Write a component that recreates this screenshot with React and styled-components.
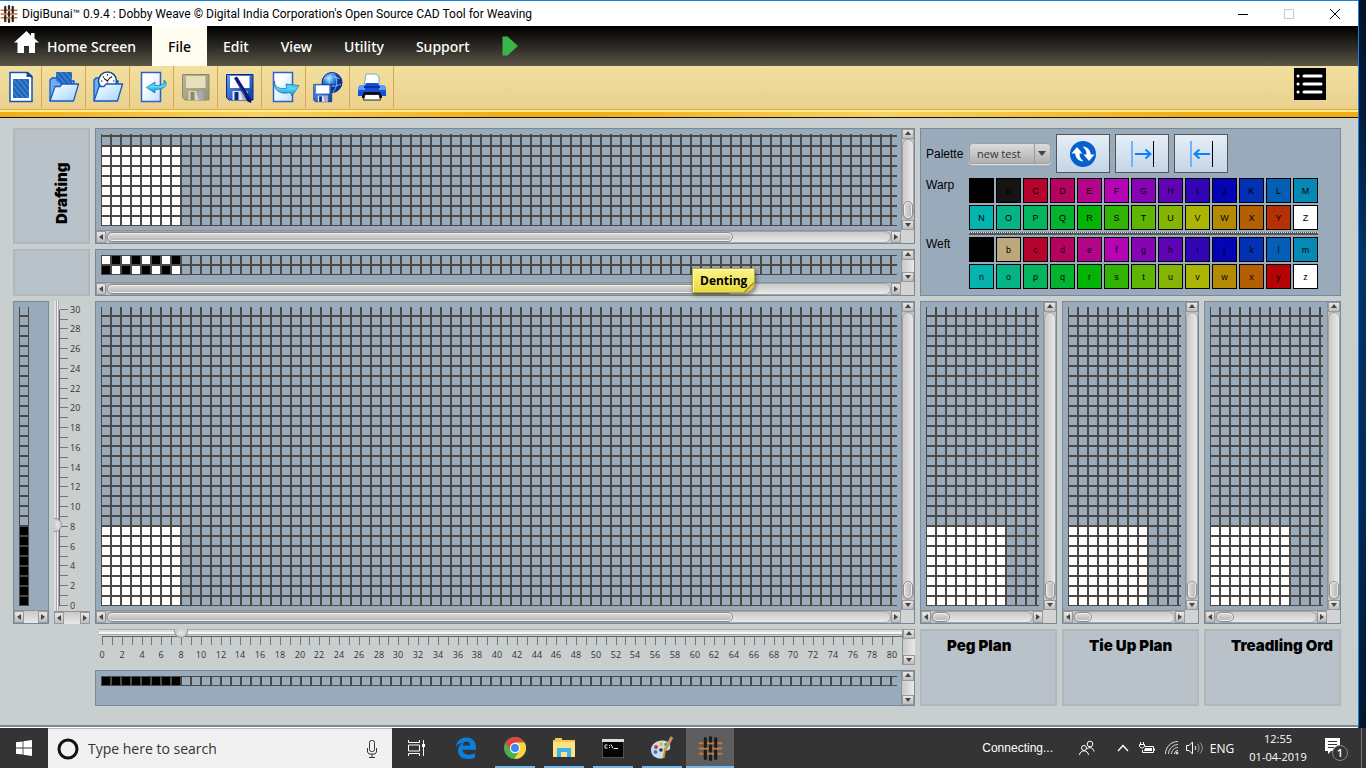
import React, { useId, useState } from 'react'
import styled, { createGlobalStyle, css } from 'styled-components'

const GlobalStyle = createGlobalStyle`
  * {
    box-sizing: border-box;
  }

  body {
    margin: 0;
    background: #001a38;
    font-family: 'Open Sans', 'Noto Sans', sans-serif;
    font-size: 12px;
    color: #000;
  }

  button, input, select {
    font: inherit;
    color: inherit;
    margin: 0;
    padding: 0;
    border: 0;
    background: none;
  }

  svg {
    display: block;
    flex: none;
  }
`

const LINE = '#4c4846'
const CELL = 10

/* ---------- window frame ---------- */

const Desktop = styled.div`
  padding-right: 7px;
  background: linear-gradient(#00122a, #002046 20%, #003468 35%, #002a58 70%, #001630);
`

const Window = styled.div`
  border-top: 1px solid #1b7fd4;
  border-right: 1px solid #1b7fd4;
  background: #c9cfce;
`

const TitleBar = styled.header`
  display: flex;
  align-items: center;
  height: 25px;
  background: #fff;

  h1 {
    flex: 1;
    margin: 0 0 0 4px;
    font-family: Roboto, sans-serif;
    font-size: 12px;
    font-weight: 400;
    line-height: 24px;
    white-space: nowrap;
  }
`

const CaptionButton = styled.button`
  display: flex;
  align-items: center;
  justify-content: center;
  width: 46px;
  height: 24px;
`

const MenuBar = styled.nav`
  display: flex;
  height: 40px;
  background: linear-gradient(#000, #2a2823 50%, #5b5647);
`

const MenuItem = styled.button`
  display: flex;
  align-items: center;
  gap: 8px;
  padding: 0 16px;
  font-family: 'Noto Sans', sans-serif;
  font-size: 14px;
  font-weight: 500;
  color: #fff;

  &:first-child {
    padding-left: 14px;
  }

  ${p => p.$active && css`
    background: #fffdf0;
    color: #000;
  `}
`

const Toolbar = styled.div`
  display: flex;
  height: 43px;
  background: linear-gradient(#f3e09e, #e9d08f);
`

const ToolButton = styled.button`
  display: flex;
  align-items: center;
  justify-content: center;
  width: 44px;
  height: 42px;
  border-right: 1px solid #dda550;

  &:first-child {
    width: 42px;
  }
`

const ListButton = styled.button`
  width: 32px;
  height: 32px;
  margin: 2px 32px 0 auto;
  background: #000;
`

const GoldStrip = styled.div`
  height: 9px;
  border-top: 1px solid #f0a040;
  border-bottom: 1px solid #111;
  background:
    linear-gradient(#fbf08a, #fbf08a) 0 0 / 100% 2px no-repeat,
    linear-gradient(90deg, #f0ad12, #f8d360 19%, #f0ad12 37%, #f0ad12 43%, #f8d360 65%, #f0ad12 88%);
`

/* ---------- workspace ---------- */

const Workspace = styled.main`
  display: grid;
  grid-template-columns: 77px minmax(0, 1fr) repeat(3, 137px);
  gap: 5px;
  padding: 10px 17px 19px 13px;
  border-bottom: 2px solid #788896;
  box-shadow: 0 1px 0 #fff;
  margin-bottom: 1px;
`

const Panel = styled.section`
  position: relative;
  display: grid;
  grid-template-columns: minmax(0, 1fr) auto;
  grid-template-rows: 1fr auto;
  border: 1px solid #778899;
  background: #99aaba;
`

const Viewport = styled.div`
  padding: 5px 4px ${p => p.$bottom || 4}px 5px;
`

const Corner = styled.div`
  background: #d3d3d3;
`

const PlanLabel = styled.h2`
  grid-row: span 2;
  margin: 0;
  padding: 5px 4px 5px 25px;
  border: 2px solid #b0b8be;
  background: #bac2c9;
  font-family: Inter, 'Liberation Sans', sans-serif;
  font-size: 15px;
  font-weight: 900;
  line-height: 20px;
  white-space: nowrap;
  overflow: hidden;
`

const SideLabel = styled.h2`
  display: flex;
  justify-content: flex-end;
  margin: 0;
  padding: 18px;
  border: 2px solid #b0b8be;
  background: #bac2c9;
  font-family: Inter, 'Liberation Sans', sans-serif;
  font-size: 15px;
  font-weight: 900;
  line-height: 16px;

  span {
    writing-mode: vertical-rl;
    transform: rotate(180deg);
  }
`

const SideColumns = styled.div`
  display: grid;
  grid-template-columns: 1fr 1fr;
  gap: 5px;
`

/* ---------- scroll bars ---------- */

const BarBox = styled.div`
  display: flex;
  flex-direction: ${p => (p.$vertical ? 'column' : 'row')};
  ${p => (p.$vertical ? 'width: 13px;' : 'height: 13px;')}
  background: #c4c4c4;
  border: 0 solid #909090;
  border-width: ${p => (p.$vertical ? '0 0 0 1px' : '1px 0 0 0')};
`

const BarButton = styled.button`
  display: flex;
  align-items: center;
  justify-content: center;
  flex: none;
  ${p => (p.$vertical ? 'height: 10px;' : 'width: 10px;')}
  border: 1px solid #999;
  background: linear-gradient(#e8e8e8, #bdbdbd);
`

const BarTrack = styled.div`
  flex: 1;
  display: flex;
  flex-direction: ${p => (p.$vertical ? 'column' : 'row')};
  justify-content: ${p => (p.$atEnd ? 'flex-end' : 'flex-start')};
  background: linear-gradient(${p => (p.$vertical ? '90deg' : '180deg')}, #c9c9c9, #e9e9e9);
  ${p => !p.$empty && css`
    border: 1px solid #a4a4a4;
    border-radius: 6px;
  `}
`

const BarThumb = styled.div`
  flex: 0 0 ${p => p.$size};
  border: 1px solid #8e8e8e;
  border-radius: 6px;
  box-shadow: inset 0 0 0 1px #eee;
  background: linear-gradient(${p => (p.$vertical ? '90deg' : '180deg')}, #dedede, #b4b4b4);
`

const ARROWS = {
  up: 'M0 4h6L3 0z',
  down: 'M0 1h6L3 5z',
  left: 'M5 0v6L1 3z',
  right: 'M1 0v6l4-3z',
}

const Arrow = ({ to }) => (
  <svg width="6" height="6" viewBox="0 0 6 6"><path d={ARROWS[to]} fill="#444" /></svg>
)

const ScrollBar = ({ vertical, size, atEnd }) => (
  <BarBox $vertical={vertical}>
    <BarButton $vertical={vertical} aria-label={vertical ? 'Scroll up' : 'Scroll left'}>
      <Arrow to={vertical ? 'up' : 'left'} />
    </BarButton>
    <BarTrack $vertical={vertical} $atEnd={atEnd} $empty={!size}>
      {size && <BarThumb $vertical={vertical} $size={size} />}
    </BarTrack>
    <BarButton $vertical={vertical} aria-label={vertical ? 'Scroll down' : 'Scroll right'}>
      <Arrow to={vertical ? 'down' : 'right'} />
    </BarButton>
  </BarBox>
)

/* ---------- weave grids ---------- */

// cells are counted from the bottom left, like on point paper
const Weave = ({ height, width = '100%', cells }) => {
  const id = useId()
  return (
    <svg width={width} height={height} shapeRendering="crispEdges">
      <defs>
        <pattern id={id} width={CELL} height={CELL} y={height % CELL} patternUnits="userSpaceOnUse">
          <rect x="0.5" y="0.5" width="9" height="9" fill="none" stroke={LINE} />
        </pattern>
      </defs>
      {cells.map(([col, row, fill]) => (
        <rect
          key={`${col}-${row}`}
          x={col * CELL}
          y={height - (row + 1) * CELL}
          width={CELL}
          height={CELL}
          fill={fill}
        />
      ))}
      <rect width="100%" height="100%" fill={`url(#${id})`} />
    </svg>
  )
}

const block = (cols, rows, paint) => {
  const list = []
  for (let r = 0; r < rows; r++) {
    for (let c = 0; c < cols; c++) list.push([c, r, paint(c, r)])
  }
  return list
}

const white = () => '#fff'
const black = () => '#000'
const WHITE_BLOCK = block(8, 8, white)
const DENTING = block(8, 2, (c, r) => ((c + r) % 2 ? '#fff' : '#000'))
const WARP_COLORS = block(1, 8, black)
const WEFT_COLORS = block(8, 1, black)

const WeavePanel = ({ height, bottom, cells, vSize, hSize, children }) => (
  <Panel>
    <Viewport $bottom={bottom}><Weave height={height} cells={cells} /></Viewport>
    <ScrollBar vertical size={vSize} atEnd />
    <ScrollBar size={hSize} />
    <Corner />
    {children}
  </Panel>
)

/* ---------- rulers ---------- */

const RulerArea = styled.div`
  display: grid;
  grid-template-columns: minmax(0, 1fr);
  overflow: hidden;

  > * {
    grid-area: 1 / 1;
  }
`

const thumbLook = css`
  appearance: none;
  border: 1px solid #999;
  background: radial-gradient(#e6e6e6, #c2c2c2);
`

const HRange = styled.input`
  appearance: none;
  align-self: start;
  width: 100%;
  height: 9px;

  &::-webkit-slider-runnable-track {
    height: 9px;
    background: linear-gradient(#a8a8a8 1px, #dedede 1px 3px, #f6f6f6 3px 5px, #aaa 5px 6px, transparent 6px) 4px 0 no-repeat;
  }

  &::-webkit-slider-thumb {
    ${thumbLook}
    width: 14px;
    height: 9px;
    border-top: 0;
    border-radius: 0 0 7px 7px;
  }
`

const VRange = styled.input`
  appearance: none;
  writing-mode: vertical-lr;
  direction: rtl;
  justify-self: start;
  width: 8px;
  height: 310px;

  &::-webkit-slider-runnable-track {
    width: 8px;
    background: linear-gradient(90deg, #dedede 2px, #aaa 2px 3px, #f6f6f6 3px 4px, #aaa 4px 5px, transparent 5px);
  }

  &::-webkit-slider-thumb {
    ${thumbLook}
    width: 8px;
    height: 14px;
    border-left: 0;
    border-radius: 0 7px 7px 0;
  }
`

const RulerText = styled.text`
  font-size: 9px;
  fill: #333;
`

const step = i => Math.round((i * 79) / 8)

const HRuler = () => (
  <svg width="100%" height="36" shapeRendering="crispEdges">
    <line x1="7" x2="100%" y1="7.5" y2="7.5" stroke="#666" />
    {Array.from({ length: 101 }, (_, i) => (
      <line key={i} x1={step(i) + 7.5} x2={step(i) + 7.5} y1="8" y2="16" stroke="#777" />
    ))}
    {Array.from({ length: 41 }, (_, i) => (
      <RulerText key={i} x={step(i * 2) + 7} y="29" textAnchor="middle">{i * 2}</RulerText>
    ))}
  </svg>
)

const VRuler = () => (
  <svg width="100%" height="310" shapeRendering="crispEdges">
    <line x1="5.5" x2="5.5" y1="9" y2="305" stroke="#666" />
    {Array.from({ length: 31 }, (_, i) => (
      <line key={i} x1="6" x2="14" y1={304.5 - step(i)} y2={304.5 - step(i)} stroke="#777" />
    ))}
    {Array.from({ length: 16 }, (_, i) => (
      <RulerText key={i} x="16" y={308 - step(i * 2)}>{i * 2}</RulerText>
    ))}
  </svg>
)

const HRulerRow = styled.div`
  display: grid;
  grid-column: 2;
  grid-template-columns: minmax(0, 1fr) auto;
`

const WeftPanel = styled(Panel)`
  grid-column: 2;
`

const VRulerColumn = styled.div`
  display: grid;
  grid-template-rows: 1fr auto;
`

/* ---------- note ---------- */

const Note = styled.div`
  position: absolute;
  left: 596px;
  top: 18px;
  padding: 0 7px;
  border: 1px solid #b8a92c;
  border-radius: 0 0 10px 0;
  background: linear-gradient(135deg, transparent 88%, #a89a20 88% 90%, #d8ca50 90%), linear-gradient(#fbf48c, #e8d93e);
  box-shadow: 1px 2px 4px rgba(0, 0, 0, 0.5), inset 1px 1px 0 #fffbc4;
  font-size: 12px;
  font-weight: 700;
  line-height: 23px;
`

/* ---------- palette ---------- */

const PalettePanel = styled.section`
  grid-column: span 3;
  grid-row: span 2;
  display: grid;
  grid-template-columns: 43px auto;
  justify-content: start;
  align-content: start;
  padding: 5px 5px 6px;
  border: 1px solid #778899;
  background: #99aaba;
  font-family: 'Liberation Sans', Arial, sans-serif;
  font-size: 12px;
  line-height: 14px;
`

const PaletteTop = styled.div`
  display: flex;
  align-items: center;
  gap: 5px;
  margin-bottom: 5px;
`

const PaletteLabel = styled.label`
  align-self: center;
  margin-bottom: 5px;
`

const SelectBox = styled.div`
  position: relative;
  width: 82px;

  select {
    appearance: none;
    width: 100%;
    height: 21px;
    padding-left: 7px;
    border: 1px solid #a0a0a0;
    border-radius: 4px;
    background: linear-gradient(90deg, transparent 64px, #999 64px 65px, transparent 65px), linear-gradient(#dcdcdc, #b0b0b0);
    box-shadow: 0 1px 1px #e4e8ec;
    font-family: 'Open Sans', sans-serif;
    font-size: 11px;
    color: #333;
  }

  svg {
    position: absolute;
    right: 5px;
    top: 8px;
    pointer-events: none;
  }
`

const PaletteButton = styled.button`
  display: flex;
  align-items: center;
  justify-content: center;
  width: 54px;
  height: 39px;
  border: 1px solid #555;
  background: linear-gradient(#e6eef7, #c3d5e8);
`

const Swatches = styled.div`
  display: grid;
  grid-template-columns: repeat(13, 25px);
  gap: 2px;
`

const Swatch = styled.button`
  height: 25px;
  border: 1px solid #000;
  background: ${p => p.$color};
  font-size: 9px;
`

const Divider = styled.div`
  grid-column: 2;
  height: 3px;
  margin: 2px 0;
  border-top: 1px dotted #ddd;
  background: #555;
`

const HUES = [
  '#000000', '#151515', '#b4042e', '#b4045f', '#b4048a', '#b404b4', '#8604b4', '#5f04b4', '#3104b4', '#0404b4', '#0431b4', '#045fb4', '#048ab4',
  '#04b4ae', '#04b486', '#04b45f', '#04b431', '#04b404', '#31b404', '#5fb404', '#86b404', '#aeb404', '#b48a04', '#b45f04', '#b43104', '#ffffff',
]

const warp = HUES.map((color, i) => ({ name: String.fromCharCode(65 + i), color }))
const weft = HUES.map((color, i) => ({ name: String.fromCharCode(97 + i), color }))
weft[1].color = '#bda87c'
weft[24].color = '#b40404'

const SwatchGrid = ({ items }) => (
  <Swatches>
    {items.map(s => <Swatch key={s.name} $color={s.color}>{s.name}</Swatch>)}
  </Swatches>
)

const Palette = () => (
  <PalettePanel>
    <PaletteLabel htmlFor="palette">Palette</PaletteLabel>
    <PaletteTop>
      <SelectBox>
        <select id="palette"><option>new test</option></select>
        <svg width="8" height="5"><path d="M0 0h8L4 5z" fill="#444" /></svg>
      </SelectBox>
      <PaletteButton aria-label="Swap colors">
        <svg width="28" height="28" viewBox="0 0 28 28">
          <circle cx="14" cy="14" r="13" fill="#0560cc" />
          <path d="M8 7L13.500 13.500h-3c0 3 1 5.500 4 8-5-.5-8-3.500-8.300-8H2.500z" fill="#fff" />
          <path d="M20 21L14.500 14.500h3c0-3-1-5.500-4-8 5 .5 8 3.500 8.300 8h3.700z" fill="#fff" />
        </svg>
      </PaletteButton>
      <PaletteButton aria-label="Warp to weft">
        <svg width="24" height="28" fill="none">
          <path d="M2 1v26" stroke="#71b1f7" strokeWidth="2" />
          <path d="M23.500 1v26" stroke="#000" />
          <path d="M5 14h14M15.500 9.500l5 4.500-5 4.500" stroke="#1080f8" strokeWidth="2" />
        </svg>
      </PaletteButton>
      <PaletteButton aria-label="Weft to warp">
        <svg width="24" height="28" fill="none">
          <path d="M2 1v26" stroke="#71b1f7" strokeWidth="2" />
          <path d="M23.500 1v26" stroke="#000" />
          <path d="M21 14H7M10.500 9.500L5.500 14l5 4.500" stroke="#1080f8" strokeWidth="2" />
        </svg>
      </PaletteButton>
    </PaletteTop>
    <span>Warp</span>
    <SwatchGrid items={warp} />
    <Divider />
    <span>Weft</span>
    <SwatchGrid items={weft} />
  </PalettePanel>
)

/* ---------- icons ---------- */

const Logo = ({ size, ink = '#2c2a28' }) => (
  <svg width={size} height={size} viewBox="0 0 24 24" fill="none" strokeLinecap="round">
    <path d="M1.500 7h21M1.500 12h21M1.500 17h21" stroke="#cf7434" strokeWidth="2" />
    <path d="M7 2.500v7.500M7 14.500v7M12 1.500v3.500M12 9.500v5M12 19v3.500M17 2.500v7.500M17 14.500v7" stroke={ink} strokeWidth="3" />
  </svg>
)

const Gradients = () => (
  <svg width="0" height="0" style={{ position: 'absolute' }} aria-hidden="true">
    <defs>
      <linearGradient id="folder" x2="1" y2="1">
        <stop stopColor="#fff" />
        <stop offset="1" stopColor="#9fd4fb" />
      </linearGradient>
      <linearGradient id="disk" x2="1" y2="1">
        <stop stopColor="#5f9bea" />
        <stop offset="1" stopColor="#0b3aa8" />
      </linearGradient>
      <linearGradient id="diskOff" x2="1" y2="1">
        <stop stopColor="#b9b494" />
        <stop offset="1" stopColor="#98947c" />
      </linearGradient>
      <linearGradient id="sheet" x2="1" y2="1">
        <stop offset="0.300" stopColor="#fff" />
        <stop offset="1" stopColor="#c2def8" />
      </linearGradient>
      <linearGradient id="cyan" x2="0" y2="1">
        <stop stopColor="#2ab4e8" />
        <stop offset="0.500" stopColor="#58d8fa" />
        <stop offset="1" stopColor="#0a8cc8" />
      </linearGradient>
      <radialGradient id="globe" cx="0.350" cy="0.300">
        <stop stopColor="#bfe6ff" />
        <stop offset="0.500" stopColor="#3f8fe8" />
        <stop offset="1" stopColor="#0a2f98" />
      </radialGradient>
      <pattern id="twill" width="4" height="4" patternUnits="userSpaceOnUse" patternTransform="rotate(-40)">
        <rect width="4" height="4" fill="#1c62b8" />
        <rect width="1.500" height="4" fill="#3f88d2" />
      </pattern>
    </defs>
  </svg>
)

const Tool = ({ children }) => <svg width="32" height="32" viewBox="0 0 32 32">{children}</svg>

const Sheet = () => (
  <path d="M5.500 1.500h19v29h-19z" fill="url(#sheet)" stroke="#2a62c8" strokeWidth="1.500" />
)

const FolderFront = () => (
  <path d="M2 30L7 15.500h5l2-2.500h16.500L25.500 30z" fill="url(#folder)" stroke="#1458c4" strokeWidth="1.300" strokeLinejoin="round" />
)

const FolderBack = () => (
  <path d="M2 30V9l2-2h6l2 3h14v16" fill="#6eaef2" stroke="#1458c4" strokeWidth="1.300" />
)

const Disk = ({ fill = 'url(#disk)', edge = '#0a2a86', paper = '#fff' }) => (
  <g>
    <path d="M2.500 3.500h26.500v25.500h-24l-2.500-2.500z" fill={fill} stroke={edge} />
    <path d="M6 5h19.500v12H6z" fill={paper} />
    <path d="M8.500 20h15v9h-15z" fill={paper} opacity="0.850" />
    <path d="M10.500 21h4v8h-4z" fill={edge} />
    <path d="M16 20h8v9h-5z" fill="#8a97b0" opacity="0.700" />
  </g>
)

const NewIcon = () => (
  <Tool>
    <path d="M5 1.500h17l5 5v24H5z" fill="#fff" stroke="#1450c0" strokeWidth="1.500" />
    <path d="M21 1l6.500 6.500V5L23 1z" fill="#0c3c9c" />
    <path d="M21.500 1.500v4.500h5" fill="#1d50b4" />
    <path d="M8 8h16v19H8z" fill="url(#twill)" />
  </Tool>
)

const OpenIcon = () => (
  <Tool>
    <FolderBack />
    <path d="M8 1h16v14l-3 3-13-8z" fill="url(#twill)" />
    <FolderFront />
  </Tool>
)

const RecentIcon = () => (
  <Tool>
    <FolderBack />
    <circle cx="15.500" cy="10" r="9" fill="#fff" stroke="#174a94" strokeWidth="1.500" />
    <path d="M15.500 3v1.500M9 10h1.500M21 10h1.500M11 5.500l1 1M20 5.500l-1 1M12 7.500l3.500 2.500 3-4" stroke="#222" strokeWidth="1.200" fill="none" />
    <path d="M15.500 10v5" stroke="#d55" strokeWidth="1.200" />
    <FolderFront />
  </Tool>
)

const ImportIcon = () => (
  <Tool>
    <Sheet />
    <path d="M28 9c3 2 3 6-1 8-2 1-5 1.500-8 1.500V22l-8.500-5.500L19 11v3.500c5 0 10-.5 9-5.500z" fill="url(#cyan)" stroke="#0b6ea8" strokeWidth="0.700" />
  </Tool>
)

const SaveIcon = () => <Tool><Disk fill="url(#diskOff)" edge="#8c886e" paper="#e6dfba" /></Tool>

const SaveAsIcon = () => (
  <Tool>
    <Disk />
    <path d="M10 7l3-1.500L27.500 29l-.5 3-3.500-1.500z" fill="#0b1570" />
    <path d="M13.500 12l8 13" stroke="#3a50b0" />
  </Tool>
)

const ExportIcon = () => (
  <Tool>
    <Sheet />
    <path d="M6.500 10c0 6 4 8 12 7.500l-.5-4.500L31 14.500 24 25l-2-3.500C13 24 5 20 6.500 10z" fill="url(#cyan)" stroke="#0b6ea8" strokeWidth="0.700" />
  </Tool>
)

const WebSaveIcon = () => (
  <Tool>
    <circle cx="20" cy="11.500" r="10" fill="url(#globe)" stroke="#0b2f88" />
    <path d="M12 8c5-3 11-3 16 0M11 14c5 2 13 2 18-1M20 2c-4 5-4 13 0 19M21 2c5 6 5 13 0 19" stroke="#b5dcff" strokeWidth="0.700" fill="none" />
    <g transform="translate(0 11) scale(0.680)"><Disk /></g>
  </Tool>
)

const PrintIcon = () => (
  <Tool>
    <path d="M10 3h10l3 3v9H8z" fill="#fff" stroke="#7fa0d0" />
    <path d="M4 14h5l1-2h12l1 2h5l2 3v8H2v-8z" fill="#1450d8" />
    <path d="M4 14h5v5H2v-2zM23 14h5l2 3v2h-7z" fill="#5c9cf4" />
    <path d="M8 15h16v2H8z" fill="#0a2f98" />
    <path d="M6 25l2-4h16l2 4v2H6z" fill="#0c0c0c" />
    <path d="M9 23.500h14l1.500 5.500h-17z" fill="#fff" stroke="#222" />
  </Tool>
)

const TOOLS = [
  ['New', NewIcon], ['Open', OpenIcon], ['Open recent', RecentIcon], ['Import', ImportIcon], ['Save', SaveIcon],
  ['Save as', SaveAsIcon], ['Export', ExportIcon], ['Save to web', WebSaveIcon], ['Print', PrintIcon],
]

/* ---------- taskbar ---------- */

const TaskBar = styled.footer`
  display: flex;
  align-items: stretch;
  height: 40px;
  background: #343434;
  color: #fff;
`

const StartButton = styled.button`
  display: flex;
  align-items: center;
  justify-content: center;
  width: 48px;
`

const SearchBox = styled.div`
  display: flex;
  align-items: center;
  gap: 9px;
  width: 344px;
  padding: 0 13px 0 9px;
  border-top: 1px solid #b8b8b8;
  background: #f1f1f1;
  color: #333;

  input {
    flex: 1;
    min-width: 0;
    font-size: 14px;
    outline: 0;
  }

  input::placeholder {
    color: #333;
  }
`

const Apps = styled.div`
  display: flex;
`

const AppButton = styled.button`
  display: flex;
  align-items: center;
  justify-content: center;
  width: ${p => (p.$active ? 48 : 49)}px;
  background:
    linear-gradient(#76b9ed, #76b9ed) center bottom / ${p => (p.$active ? '100%' : '40px')} ${p => (p.$running ? 2 : 0)}px no-repeat,
    ${p => (p.$active ? '#5e5e5e' : 'transparent')};
`

const Tray = styled.div`
  display: flex;
  align-items: center;
  margin-left: auto;
  padding-right: 4px;
  font-size: 12px;
`

const Connecting = styled.span`
  margin-right: 5px;
  font-family: 'Liberation Sans', Arial, sans-serif;
`

const TrayButton = styled.button`
  display: flex;
  align-items: center;
  justify-content: center;
  width: ${p => p.$width}px;
  height: 100%;
`

const Clock = styled.time`
  width: 84px;
  font-size: 11px;
  line-height: 18px;
  text-align: center;
`

const NoticeButton = styled.button`
  width: 42px;
  height: 100%;
  border-right: 1px solid #777;
  padding-left: 4px;
`

const TaskBarRow = () => (
  <TaskBar>
    <StartButton aria-label="Start">
      <svg width="16" height="16" fill="#fff"><path d="M0 2.300L6.600 1.400v6.200H0zM7.400 1.300L16 0v7.600H7.400zM0 8.400h6.600v6.200L0 13.700zM7.400 8.400H16V16l-8.600-1.200z" /></svg>
    </StartButton>
    <SearchBox>
      <svg width="22" height="22"><circle cx="11" cy="11" r="9" fill="none" stroke="#111" strokeWidth="3" /></svg>
      <input type="text" placeholder="Type here to search" aria-label="Type here to search" />
      <svg width="14" height="18" fill="none" stroke="#333"><rect x="4.500" y="0.500" width="5" height="11" rx="2" /><path d="M2.500 8v4l1.500 2h6l1.500-2V8M7 14v3M4 17.500h6" /></svg>
    </SearchBox>
    <Apps>
      <AppButton aria-label="Task view">
        <svg width="18" height="16" fill="none" stroke="#fff"><path d="M.5 0v2.500h11V0M.5 5h11v6H.5zM.5 16v-2.500h11V16M15.500 0v16" /><path d="M14 4h3v3h-3z" fill="#fff" stroke="none" /></svg>
      </AppButton>
      <AppButton aria-label="Edge">
        <svg width="22" height="22" viewBox="0 0 22 22"><path d="M1 10C1.500 4 5.500.5 11.300.5 17.800.5 21 5 21 10.300v2.400H7.600c.2 3.600 3.200 5 6.400 5 2.200 0 4.200-.6 6-1.600v4.300c-2 1.100-4.300 1.600-7 1.600C7 22 3 18.600 3 13.500 3 10.200 4.800 7.400 8 5.800 4.800 6 2.500 7.600 1 10zm6.700-1.400h7.500c0-2.700-1.400-4.200-3.700-4.200-2.200 0-3.600 1.700-3.800 4.200z" fill="#0b7fe0" /></svg>
      </AppButton>
      <AppButton $running aria-label="Chrome">
        <svg width="22" height="22" viewBox="0 0 22 22">
          <circle cx="11" cy="11" r="11" fill="#4caf50" />
          <path d="M1.500 5.500A11 11 0 0 1 20.500 5.500H11L6.500 13.500z" fill="#e2453a" />
          <path d="M20.500 5.500A11 11 0 0 1 10.500 22l5-8.500c1-2 .8-5.500-4.500-8z" fill="#fdd43b" />
          <circle cx="11" cy="11" r="5.200" fill="#fff" /><circle cx="11" cy="11" r="4" fill="#4285f4" />
        </svg>
      </AppButton>
      <AppButton $running aria-label="File Explorer">
        <svg width="22" height="20" viewBox="0 0 22 20"><path d="M0 2h2V0h7v2h13v17H0z" fill="#fde18b" /><path d="M0 2h2V0h7v2h13v2H0z" fill="#f5c84c" /><path d="M4 10h14v9h-4v-5H8v5H4z" fill="#3cb4e7" /></svg>
      </AppButton>
      <AppButton $running aria-label="Command Prompt">
        <svg width="22" height="19"><path d="M0 0h22v19H0z" fill="#050505" stroke="#999" /><path d="M0 0h22v3H0z" fill="#ddd" /><path d="M5.500 6H3v3h2.500M7.500 6v1M7.500 8v1M9 5.500l2 4M12 9.500h4" stroke="#eee" fill="none" /></svg>
      </AppButton>
      <AppButton $running aria-label="Paint">
        <svg width="24" height="24" viewBox="0 0 24 24">
          <path d="M1 14C1 8 7 4 13 4.500c6 .5 8 4 7 8-1 3-4 1-5.500 3s1 4-1 6.500C9 24 1 21 1 14z" fill="#c5dff0" />
          <circle cx="6" cy="11" r="2" fill="#d33" /><circle cx="11" cy="8" r="2" fill="#f2b92c" /><circle cx="16" cy="8.500" r="1.800" fill="#49a942" /><circle cx="5.500" cy="16" r="2" fill="#3a7bd5" /><circle cx="11" cy="14" r="1.800" fill="#333" />
          <path d="M22 1l-7 13" stroke="#c9955c" strokeWidth="3" /><path d="M15 14l-1.500 8" stroke="#e08a2c" strokeWidth="2" />
        </svg>
      </AppButton>
      <AppButton $running $active aria-label="DigiBunai"><Logo size={25} ink="#1c1c1c" /></AppButton>
    </Apps>
    <Tray>
      <Connecting>Connecting...</Connecting>
      <TrayButton $width={58} aria-label="People">
        <svg width="16" height="16" fill="none" stroke="#fff"><circle cx="11" cy="4" r="2.800" /><path d="M8 9c2-2.500 6.500-1.500 7 2.500" /><circle cx="5" cy="8" r="2.500" /><path d="M.5 15c.5-5.500 8.500-5.500 9 0" /></svg>
      </TrayButton>
      <TrayButton $width={14} aria-label="Show hidden icons">
        <svg width="12" height="8" fill="none" stroke="#fff" strokeWidth="1.300"><path d="M1 7l5-5.500L11 7" /></svg>
      </TrayButton>
      <TrayButton $width={34} aria-label="Battery">
        <svg width="16" height="13" fill="none" stroke="#fff"><path d="M6 4.500h8.500v6H3.500V8M15.500 6.500v2M1.500 0v2M4.500 0v2M.5 2.500h5v2L3.500 6h-1L.5 4.500z" /><path d="M6 6h7v3H5z" fill="#fff" stroke="none" /></svg>
      </TrayButton>
      <TrayButton $width={16} aria-label="Network">
        <svg width="14" height="14" fill="none" stroke="#ddd"><path d="M.5 13C.5 6 6 .5 13 .5M3.500 13C3.500 8 8 3.500 13 3.500M6.500 13c0-3.500 3-6.500 6.500-6.500M9.500 13c0-2 1.500-3.500 3.500-3.500" /><circle cx="12" cy="12" r="1" fill="#fff" /></svg>
      </TrayButton>
      <TrayButton $width={28} aria-label="Volume">
        <svg width="17" height="14" fill="none" stroke="#fff"><path d="M.5 4.500H3L6.500 1v12L3 9.500H.5z" /><path d="M9 5c1 1.500 1 3 0 4" /><path d="M11.500 3c2 2.500 2 5.500 0 8M14 1.500c3 3.500 3 7.500 0 11" stroke="#999" /></svg>
      </TrayButton>
      <TrayButton $width={28} aria-label="Language">ENG</TrayButton>
      <Clock>12:55<br />01-04-2019</Clock>
      <NoticeButton aria-label="Notifications">
        <svg width="26" height="28" viewBox="0 0 26 28">
          <path d="M1 4h15v13H7l-3 3v-3H1z" fill="#fff" /><path d="M4 7.500h9M4 10.500h9M4 13.500h6" stroke="#343434" />
          <circle cx="16" cy="19" r="7.500" fill="#343434" stroke="#888" />
          <text x="16" y="23" textAnchor="middle" fontSize="11" fontWeight="600" fill="#fff">1</text>
        </svg>
      </NoticeButton>
    </Tray>
  </TaskBar>
)

/* ---------- app ---------- */

const MENUS = ['File', 'Edit', 'View', 'Utility', 'Support']

const App = () => {
  const [menu, setMenu] = useState('File')
  const [warpCount, setWarpCount] = useState(8)
  const [weftCount, setWeftCount] = useState(8)

  return (
    <>
      <GlobalStyle />
      <Gradients />
      <Desktop>
        <Window>
          <TitleBar>
            <Logo size={18} />
            <h1>DigiBunai™ 0.9.4 : Dobby Weave © Digital India Corporation's Open Source CAD Tool for Weaving</h1>
            <CaptionButton aria-label="Minimize">
              <svg width="10" height="10"><path d="M0 5.500h10" stroke="#000" /></svg>
            </CaptionButton>
            <CaptionButton aria-label="Maximize" disabled>
              <svg width="10" height="10"><path d="M.5.500h9v9h-9z" fill="none" stroke="#c8c8c8" /></svg>
            </CaptionButton>
            <CaptionButton aria-label="Close">
              <svg width="10" height="10"><path d="M0 0l10 10M10 0L0 10" stroke="#000" /></svg>
            </CaptionButton>
          </TitleBar>
          <MenuBar>
            <MenuItem>
              <svg width="25" height="30" fill="#fff"><path d="M12.500 0L0 11.500h3.500V22H10v-7h5v7h6V11.500h4L20.500 7.500V2h-3.500v2.500z" /></svg>
              Home Screen
            </MenuItem>
            {MENUS.map(name => (
              <MenuItem key={name} $active={menu === name} onClick={() => setMenu(name)}>{name}</MenuItem>
            ))}
            <MenuItem aria-label="Run">
              <svg width="16" height="20"><path d="M.5.500h5L16 10 5.500 19.500h-5z" fill="#39b54a" /></svg>
            </MenuItem>
          </MenuBar>
          <Toolbar>
            {TOOLS.map(([name, Icon]) => (
              <ToolButton key={name} aria-label={name}><Icon /></ToolButton>
            ))}
            <ListButton aria-label="List">
              <svg width="32" height="32" stroke="#fff" strokeWidth="3" strokeLinecap="round">
                <path d="M10 8h17M10 16h17M10 24h17M4 8h.1M4 16h.1M4 24h.1" />
              </svg>
            </ListButton>
          </Toolbar>
          <GoldStrip />

          <Workspace>
            <SideLabel><span>Drafting</span></SideLabel>
            <WeavePanel height={92} cells={WHITE_BLOCK} vSize="18px" hSize="80%" />
            <Palette />

            <SideLabel />
            <WeavePanel height={20} bottom={7} cells={DENTING} hSize="80%">
              <Note role="tooltip">Denting</Note>
            </WeavePanel>

            <SideColumns>
              <Panel>
                <Viewport><Weave width={10} height={299} cells={WARP_COLORS} /></Viewport>
                <span />
                <ScrollBar />
              </Panel>
              <VRulerColumn>
                <RulerArea>
                  <VRuler />
                  <VRange
                    type="range"
                    min="0"
                    max="30"
                    value={weftCount}
                    onChange={e => setWeftCount(Number(e.target.value))}
                    aria-label="Weft count"
                  />
                </RulerArea>
                <ScrollBar />
              </VRulerColumn>
            </SideColumns>
            <WeavePanel height={299} cells={WHITE_BLOCK} vSize="18px" hSize="80%" />
            <WeavePanel height={299} cells={WHITE_BLOCK} vSize="18px" hSize="18px" />
            <WeavePanel height={299} cells={WHITE_BLOCK} vSize="18px" hSize="18px" />
            <WeavePanel height={299} cells={WHITE_BLOCK} vSize="18px" hSize="18px" />

            <HRulerRow>
              <RulerArea>
                <HRuler />
                <HRange
                  type="range"
                  min="0"
                  max="80"
                  value={warpCount}
                  onChange={e => setWarpCount(Number(e.target.value))}
                  aria-label="Warp count"
                />
              </RulerArea>
              <ScrollBar vertical />
            </HRulerRow>
            <PlanLabel>Peg Plan</PlanLabel>
            <PlanLabel>Tie Up Plan</PlanLabel>
            <PlanLabel>Treadling Ord</PlanLabel>

            <WeftPanel>
              <Viewport $bottom={19}><Weave height={10} cells={WEFT_COLORS} /></Viewport>
              <ScrollBar vertical />
            </WeftPanel>
          </Workspace>
        </Window>
      </Desktop>
      <TaskBarRow />
    </>
  )
}

export default App
